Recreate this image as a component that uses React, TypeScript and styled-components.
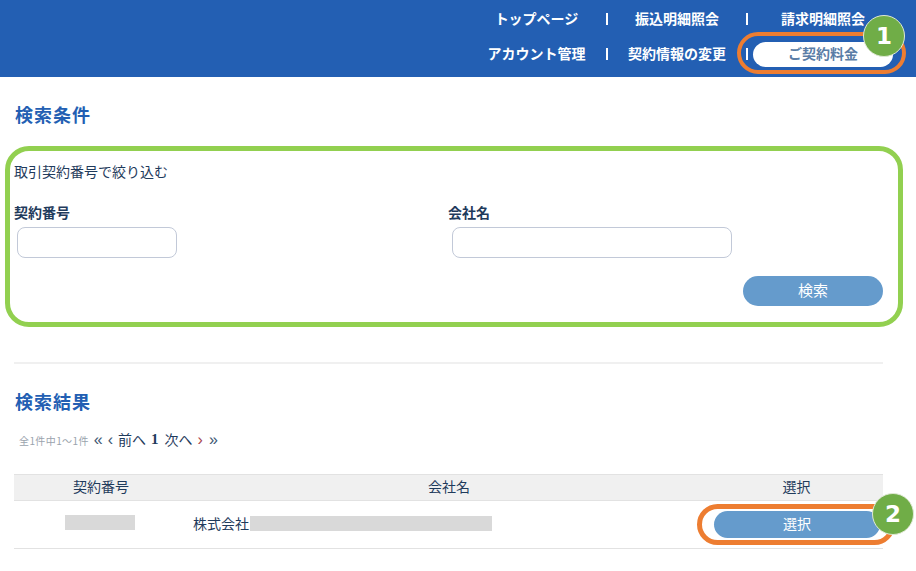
import React from "react";
import styled, { createGlobalStyle } from "styled-components";

const GlobalStyle = createGlobalStyle`
    html, body {
        margin: 0;
        padding: 0;
        background: #fff;
    }
    body {
        font-family: "Noto Sans CJK JP", "Liberation Sans", sans-serif;
        color: #1f3b5c;
        font-size: 14px;
    }
`;

const Page = styled.div`
    width: 916px;
    height: 571px;
    overflow: hidden;
`;

const Header = styled.header`
    height: 77px;
    box-sizing: border-box;
    padding: 2px 23px 0 0;
    background: #235fb3;
    display: grid;
    grid-template-columns: 139px 2px 138px 2px 145px;
    grid-auto-rows: 35px;
    justify-content: end;
    align-items: center;
`;

const NavLink = styled.a`
    color: #fff;
    font-size: 14px;
    font-weight: 700;
    line-height: 20px;
    padding-bottom: 3px;
    text-align: center;
    white-space: nowrap;
`;

const NavLast = styled(NavLink)`
    padding-left: 5px;
`;

const NavSep = styled.span`
    width: 2px;
    height: 12px;
    margin-bottom: 1px;
    background: #fff;
`;

const PillCell = styled.div`
    position: relative;
    margin-left: 5px;
`;

const Pill = styled.div`
    height: 25px;
    box-sizing: border-box;
    padding-bottom: 2px;
    border-radius: 13px;
    background: #fff;
    color: #5a7da6;
    font-size: 14px;
    font-weight: 700;
    line-height: 23px;
    text-align: center;
`;

const Highlight = styled.div<{ $top: number; $right: number; $bottom: number; $left: number; $stroke: number }>`
    position: absolute;
    top: ${(p) => p.$top}px;
    right: ${(p) => p.$right}px;
    bottom: ${(p) => p.$bottom}px;
    left: ${(p) => p.$left}px;
    border: ${(p) => p.$stroke}px solid #ed7d31;
    border-radius: 22px;
    pointer-events: none;
`;

const Badge = styled.div<{ $top: number; $right: number }>`
    position: absolute;
    top: ${(p) => p.$top}px;
    right: ${(p) => p.$right}px;
    width: 42px;
    height: 42px;
    box-sizing: border-box;
    border: 1px solid #dfe8d4;
    border-radius: 50%;
    background: #70ad47;
    color: #fff;
    font-family: "DejaVu Sans", "Liberation Sans", sans-serif;
    font-size: 23px;
    font-weight: 700;
    line-height: 40px;
    text-align: center;
`;

const Main = styled.main`
    width: 869px;
    margin-left: 14px;
`;

const SectionTitle = styled.h2<{ $top: number }>`
    margin: ${(p) => p.$top}px 0 0;
    padding: 0 0 2px 1px;
    color: #235fb3;
    font-size: 18px;
    font-weight: 700;
    line-height: 24px;
    letter-spacing: 1px;
`;

const SearchForm = styled.form`
    position: relative;
    margin-top: 34px;
`;

const FormOutline = styled.div`
    position: absolute;
    top: -16px;
    right: -20px;
    bottom: -21px;
    left: -9px;
    border: 5px solid #92d050;
    border-radius: 24px;
    pointer-events: none;
`;

const Lead = styled.p`
    margin: 0;
    padding-bottom: 2px;
    font-size: 14px;
    line-height: 18px;
`;

const Fields = styled.div`
    display: grid;
    grid-template-columns: 434px 1fr;
    margin-top: 21px;
`;

const Label = styled.label`
    display: block;
    padding-bottom: 2px;
    font-size: 14px;
    font-weight: 700;
    line-height: 18px;
`;

const TextInput = styled.input<{ $width: number; $inset: number }>`
    display: block;
    width: ${(p) => p.$width}px;
    height: 31px;
    box-sizing: border-box;
    margin: 4px 0 0 ${(p) => p.$inset}px;
    border: 1px solid #c2c9d8;
    border-radius: 8px;
    background: #fff;
`;

const FormActions = styled.div`
    display: flex;
    justify-content: flex-end;
    margin-top: 18px;
`;

const SearchButton = styled.button`
    width: 140px;
    height: 30px;
    padding: 0 0 2px;
    border: 0;
    border-radius: 15px;
    background: #659bcc;
    color: #fff;
    font-family: inherit;
    font-size: 15px;
    line-height: 28px;
`;

const Divider = styled.hr`
    height: 2px;
    margin: 56px 0 0;
    border: 0;
    background: #f0f0f0;
`;

const Pager = styled.div`
    display: flex;
    align-items: center;
    height: 20px;
    box-sizing: border-box;
    margin: 15px 0 0 5px;
    padding-bottom: 2px;
    font-size: 14px;
    line-height: 18px;
`;

const PagerCount = styled.span`
    margin-right: 5px;
    letter-spacing: 0.4px;
    color: #9aa3ad;
    font-size: 10px;
    padding-top: 3px;
`;

const PagerArrow = styled.span<{ $red?: boolean; $gap: number }>`
    margin-right: ${(p) => p.$gap}px;
    padding-top: 2px;
    color: ${(p) => (p.$red ? "#a8464f" : "#3d5673")};
    font-family: "Liberation Sans", sans-serif;
    font-size: 16px;
`;

const PagerText = styled.span`
    margin-right: 5px;
`;

const PagerCurrent = styled.strong`
    margin-right: 6px;
    font-family: "Liberation Serif", serif;
    font-size: 15px;
`;

const TableHead = styled.div`
    display: grid;
    grid-template-columns: 174px 522px 173px;
    height: 27px;
    box-sizing: border-box;
    margin-top: 24px;
    border-top: 1px solid #e2e2e2;
    border-bottom: 1px solid #e2e2e2;
    background: #f0f0f0;
    line-height: 23px;
    text-align: center;
`;

const TableRow = styled.div`
    display: grid;
    grid-template-columns: 174px 522px 173px;
    height: 48px;
    box-sizing: border-box;
    border-bottom: 1px solid #e2e2e2;
    align-items: center;
`;

const IdCell = styled.div`
    display: flex;
    justify-content: center;
    padding: 0 2px 5px 0;
`;

const NameCell = styled.div`
    display: flex;
    align-items: center;
    padding: 0 0 3px 5px;
    line-height: 20px;
`;

const Masked = styled.span<{ $width: number; $gap?: number }>`
    display: block;
    width: ${(p) => p.$width}px;
    height: 15px;
    margin: 0 0 0 ${(p) => p.$gap ?? 0}px;
    background: #d9d9d9;
`;

const SelectCell = styled.div`
    position: relative;
    width: 166px;
    margin: -1px 0 0 4px;
`;

const SelectButton = styled(SearchButton)`
    display: block;
    width: 166px;
    height: 27px;
    border-radius: 14px;
    font-size: 14px;
    line-height: 25px;
`;

export default function App() {
    return (
        <Page>
            <GlobalStyle />
            <Header>
                <NavLink>トップページ</NavLink>
                <NavSep />
                <NavLink>振込明細照会</NavLink>
                <NavSep />
                <NavLast>請求明細照会</NavLast>
                <NavLink>アカウント管理</NavLink>
                <NavSep />
                <NavLink>契約情報の変更</NavLink>
                <NavSep />
                <PillCell>
                    <Pill>ご契約料金</Pill>
                    <Highlight $top={-10} $right={-13} $bottom={-7} $left={-16} $stroke={4} />
                    <Badge $top={-27} $right={-12}>1</Badge>
                </PillCell>
            </Header>
            <Main>
                <SectionTitle $top={25}>検索条件</SectionTitle>
                <SearchForm>
                    <FormOutline />
                    <Lead>取引契約番号で絞り込む</Lead>
                    <Fields>
                        <div>
                            <Label>契約番号</Label>
                            <TextInput $width={160} $inset={3} />
                        </div>
                        <div>
                            <Label>会社名</Label>
                            <TextInput $width={280} $inset={4} />
                        </div>
                    </Fields>
                    <FormActions>
                        <SearchButton type="button">検索</SearchButton>
                    </FormActions>
                </SearchForm>
                <Divider />
                <SectionTitle $top={25}>検索結果</SectionTitle>
                <Pager>
                    <PagerCount>全1件中1～1件</PagerCount>
                    <PagerArrow $gap={5}>«</PagerArrow>
                    <PagerArrow $gap={5}>‹</PagerArrow>
                    <PagerText>前へ</PagerText>
                    <PagerCurrent>1</PagerCurrent>
                    <PagerText>次へ</PagerText>
                    <PagerArrow $red $gap={6}>›</PagerArrow>
                    <PagerArrow $gap={0}>»</PagerArrow>
                </Pager>
                <TableHead>
                    <div>契約番号</div>
                    <div>会社名</div>
                    <div>選択</div>
                </TableHead>
                <TableRow>
                    <IdCell>
                        <Masked $width={70} />
                    </IdCell>
                    <NameCell>
                        株式会社
                        <Masked $width={242} $gap={1} />
                    </NameCell>
                    <SelectCell>
                        <SelectButton type="button">選択</SelectButton>
                        <Highlight $top={-7} $right={-15} $bottom={-7} $left={-17} $stroke={5} />
                        <Badge $top={-18} $right={-34}>2</Badge>
                    </SelectCell>
                </TableRow>
            </Main>
        </Page>
    );
}
